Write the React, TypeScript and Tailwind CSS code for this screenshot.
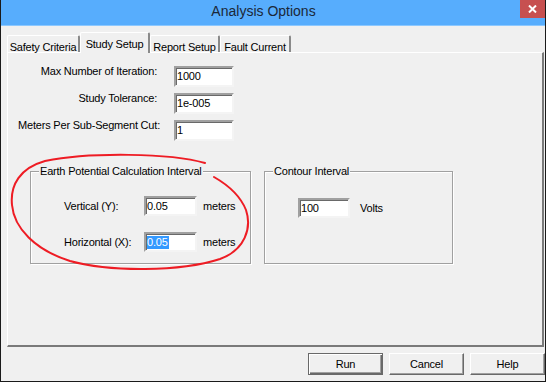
import React from "react";

const sunken =
  "bg-white border-2 border-t-[#a0a0a0] border-l-[#a0a0a0] border-r-[#f4f4f4] border-b-[#f4f4f4] shadow-[inset_1px_1px_0_#696969] flex items-center pl-[1px] text-[11px] leading-[13px] text-black";

const TextBox = ({
  value,
  size,
  selected,
}: {
  value: string;
  size: string;
  selected?: boolean;
}) => (
  <div className={`${sunken} ${size}`}>
    {selected ? (
      <span className="bg-[#3399ff] text-white pr-[1px]">{value}</span>
    ) : (
      <span>{value}</span>
    )}
  </div>
);

const Tab = ({
  label,
  width,
  active,
}: {
  label: string;
  width: string;
  active?: boolean;
}) => (
  <div
    className={`${width} flex justify-center border-t border-l border-white border-r-2 border-r-[#8a8a8a] rounded-t-[2px] bg-[#f0f0f0] text-[11px] tracking-[-0.2px] ${
      active
        ? "h-[21px] mb-[-1px] relative z-10 pt-[3px]"
        : "h-[17px] pt-[3px]"
    }`}
  >
    {label}
  </div>
);

const FieldRow = ({
  label,
  value,
  labelW,
  gap,
}: {
  label: string;
  value: string;
  labelW: string;
  gap: string;
}) => (
  <div className="flex items-start">
    <div className={`${labelW} text-right leading-[13px] -mt-[1px]`}>{label}</div>
    <div className={gap}>
      <TextBox value={value} size="w-[60px] h-[21px]" />
    </div>
  </div>
);

const GroupBox = ({
  title,
  size,
  children,
}: {
  title: string;
  size: string;
  children: React.ReactNode;
}) => (
  <div
    className={`${size} relative border border-[#a0a0a0] shadow-[inset_1px_1px_0_#fff,1px_1px_0_#fff]`}
  >
    <span className="absolute left-[8px] -top-[7px] bg-[#f0f0f0] px-[1px] leading-[13px]">
      {title}
    </span>
    {children}
  </div>
);

const Button = ({ label, isDefault }: { label: string; isDefault?: boolean }) => (
  <div
    className={`w-[75px] h-[22px] flex items-center justify-center bg-[#f0f0f0] ${
      isDefault
        ? "border border-[#696969] shadow-[inset_1px_1px_0_#fff,inset_-1px_-1px_0_#696969,inset_-2px_-2px_0_#a0a0a0]"
        : "border border-t-white border-l-white border-r-[#696969] border-b-[#696969] shadow-[inset_-1px_-1px_0_#a0a0a0]"
    }`}
  >
    {label}
  </div>
);

export default function App() {
  return (
    <div className="relative w-[546px] h-[382px] overflow-hidden border-x border-b border-[#1a1a1a] bg-[#f0f0f0] font-['Liberation_Sans',Arial,sans-serif] text-[11px] tracking-[-0.2px] text-black">
      {/* title bar */}
      <div className="flex h-[26px] bg-[#57adfd] border-b border-[#8cc8ff]">
        <div className="flex-1 pl-[6px] pt-[3px] text-center text-[14px] leading-[16px] tracking-normal text-[#1b2838]">
          Analysis Options
        </div>
        <div className="w-[25px] h-[18px] bg-[#c75050] flex items-center justify-center">
          <svg width="9" height="8" viewBox="0 0 9 8">
            <path d="M1 0.5 L8 7.5 M8 0.5 L1 7.5" stroke="#fff" strokeWidth="2" />
          </svg>
        </div>
      </div>

      <div className="pl-[6px] pt-[7px]">
        {/* tabs */}
        <div className="flex items-end h-[19px]">
          <Tab label="Safety Criteria" width="w-[73px]" />
          <Tab label="Study Setup" width="w-[70px]" active />
          <Tab label="Report Setup" width="w-[70px]" />
          <Tab label="Fault Current" width="w-[71px]" />
        </div>

        {/* tab panel */}
        <div className="w-[537px] h-[295px] border-t border-l border-white border-r-2 border-b-2 border-r-[#7a7a7a] border-b-[#7a7a7a] pt-[13px]">
          <div className="flex flex-col gap-[6px]">
            <FieldRow label="Max Number of Iteration:" value="1000" labelW="w-[149px]" gap="ml-[17px]" />
            <FieldRow label="Study Tolerance:" value="1e-005" labelW="w-[149px]" gap="ml-[17px]" />
            <FieldRow label="Meters Per Sub-Segment Cut:" value="1" labelW="w-[152px]" gap="ml-[14px]" />
          </div>

          <div className="flex mt-[30px] ml-[22px] gap-[13px]">
            <GroupBox title="Earth Potential Calculation Interval" size="w-[221px] h-[93px]">
              <div className="flex flex-col gap-[16px] pl-[33px] pt-[24px]">
                <div className="flex items-center">
                  <div className="w-[80px]">Vertical (Y):</div>
                  <TextBox value="0.05" size="w-[53px] h-[20px]" />
                  <div className="ml-[6px]">meters</div>
                </div>
                <div className="flex items-center">
                  <div className="w-[80px]">Horizontal (X):</div>
                  <TextBox value="0.05" size="w-[53px] h-[20px]" selected />
                  <div className="ml-[6px]">meters</div>
                </div>
              </div>
            </GroupBox>
            <GroupBox title="Contour Interval" size="w-[189px] h-[93px]">
              <div className="flex items-center pl-[33px] pt-[26px]">
                <TextBox value="100" size="w-[52px] h-[20px]" />
                <div className="ml-[10px]">Volts</div>
              </div>
            </GroupBox>
          </div>
        </div>

        {/* buttons */}
        <div className="flex justify-end gap-[6px] pr-[1px] mt-[6px]">
          <Button label="Run" isDefault />
          <Button label="Cancel" />
          <div className="w-[74px]">
            <Button label="Help" />
          </div>
        </div>
      </div>

      {/* hand-drawn red annotation */}
      <svg
        className="absolute left-[-1px] top-0 pointer-events-none"
        width="546"
        height="382"
        viewBox="0 0 546 382"
      >
        <path
          d="M205,163 C170,153 90,152 45,161 C20,168 10,185 12,205 C14,228 35,250 70,261 C110,272 180,272 220,259 C245,250 252,228 246,210 C240,195 228,185 214,177"
          fill="none"
          stroke="#ee1c24"
          strokeWidth="2"
          strokeLinecap="round"
        />
      </svg>
    </div>
  );
}
